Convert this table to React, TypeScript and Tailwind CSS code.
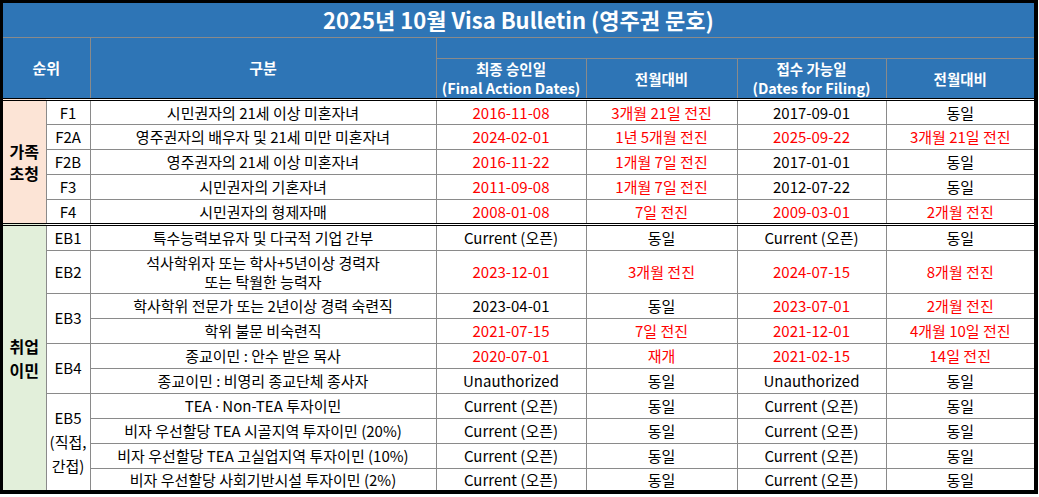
import React from 'react';

type Val = [string, boolean];

type Row = {
  desc: React.ReactNode;
  fa: Val;
  faDiff: Val;
  df: Val;
  dfDiff: Val;
  h?: string;
};

const cur: Val = ['Current (오픈)', false];
const same: Val = ['동일', false];

const family: (Row & { code: string })[] = [
  { code: 'F1', desc: '시민권자의 21세 이상 미혼자녀', fa: ['2016-11-08', true], faDiff: ['3개월 21일 전진', true], df: ['2017-09-01', false], dfDiff: same },
  { code: 'F2A', desc: '영주권자의 배우자 및 21세 미만 미혼자녀', fa: ['2024-02-01', true], faDiff: ['1년 5개월 전진', true], df: ['2025-09-22', true], dfDiff: ['3개월 21일 전진', true] },
  { code: 'F2B', desc: '영주권자의 21세 이상 미혼자녀', fa: ['2016-11-22', true], faDiff: ['1개월 7일 전진', true], df: ['2017-01-01', false], dfDiff: same },
  { code: 'F3', desc: '시민권자의 기혼자녀', fa: ['2011-09-08', true], faDiff: ['1개월 7일 전진', true], df: ['2012-07-22', false], dfDiff: same },
  { code: 'F4', desc: '시민권자의 형제자매', fa: ['2008-01-08', true], faDiff: ['7일 전진', true], df: ['2009-03-01', true], dfDiff: ['2개월 전진', true] },
];

// one group per code cell, rows share it via rowSpan
const employment: { code: React.ReactNode; rows: Row[] }[] = [
  { code: 'EB1', rows: [{ desc: '특수능력보유자 및 다국적 기업 간부', fa: cur, faDiff: same, df: cur, dfDiff: same }] },
  {
    code: 'EB2',
    rows: [
      {
        desc: (
          <>
            석사학위자 또는 학사+5년이상 경력자
            <br />
            또는 탁월한 능력자
          </>
        ),
        fa: ['2023-12-01', true],
        faDiff: ['3개월 전진', true],
        df: ['2024-07-15', true],
        dfDiff: ['8개월 전진', true],
        h: 'h-[43px]',
      },
    ],
  },
  {
    code: 'EB3',
    rows: [
      { desc: '학사학위 전문가 또는 2년이상 경력 숙련직', fa: ['2023-04-01', false], faDiff: same, df: ['2023-07-01', true], dfDiff: ['2개월 전진', true] },
      { desc: '학위 불문 비숙련직', fa: ['2021-07-15', true], faDiff: ['7일 전진', true], df: ['2021-12-01', true], dfDiff: ['4개월 10일 전진', true] },
    ],
  },
  {
    code: 'EB4',
    rows: [
      { desc: '종교이민 : 안수 받은 목사', fa: ['2020-07-01', true], faDiff: ['재개', true], df: ['2021-02-15', true], dfDiff: ['14일 전진', true] },
      { desc: '종교이민 : 비영리 종교단체 종사자', fa: ['Unauthorized', false], faDiff: same, df: ['Unauthorized', false], dfDiff: same },
    ],
  },
  {
    code: (
      <>
        EB5
        <br />
        (직접,
        <br />
        간접)
      </>
    ),
    rows: [
      {
        desc: (
          <>
            TEA <span className="font-['Noto_Sans']">·</span> Non-TEA 투자이민
          </>
        ),
        fa: cur,
        faDiff: same,
        df: cur,
        dfDiff: same,
      },
      { desc: '비자 우선할당 TEA 시골지역 투자이민 (20%)', fa: cur, faDiff: same, df: cur, dfDiff: same },
      { desc: '비자 우선할당 TEA 고실업지역 투자이민 (10%)', fa: cur, faDiff: same, df: cur, dfDiff: same },
      { desc: '비자 우선할당 사회기반시설 투자이민 (2%)', fa: cur, faDiff: same, df: cur, dfDiff: same, h: 'h-[22px]' },
    ],
  },
];

const td = 'border border-[#8a8a8a] text-center align-middle p-0 leading-[19px]';
const sep = 'border-t-[3px] border-t-black border-double';

function V({ v, first }: { v: Val; first?: boolean }) {
  return <td className={`${td} ${first ? sep : ''} ${v[1] ? 'text-[#ff0000]' : 'text-black'}`}>{v[0]}</td>;
}

function DataCells({ r, first }: { r: Row; first?: boolean }) {
  return (
    <>
      <td className={`${td} ${first ? sep : ''} text-black`}>{r.desc}</td>
      <V v={r.fa} first={first} />
      <V v={r.faDiff} first={first} />
      <V v={r.df} first={first} />
      <V v={r.dfDiff} first={first} />
    </>
  );
}

export default function App() {
  const th = 'border border-[#8a8a8a] text-center align-middle font-bold text-white p-0 leading-[19px]';

  return (
    <div className="w-[1039px] h-[497px] bg-white" style={{ fontFamily: '"Noto Sans CJK KR", "Noto Sans", sans-serif' }}>
      <div className="w-[1038px] border-l-[3px] border-t-[3px] border-r-[4px] border-b-[4px] border-black">
        <table className="w-full table-fixed border-collapse border-hidden text-[15px]">
          <colgroup>
            <col className="w-[43px]" />
            <col className="w-[44px]" />
            <col className="w-[346px]" />
            <col className="w-[150px]" />
            <col className="w-[151px]" />
            <col className="w-[149px]" />
            <col />
          </colgroup>
          <thead className="bg-[#2e75b6]">
            <tr className="h-[34px]">
              <th colSpan={7} className={`${th} text-[22px]`}>
                2025년 10월 Visa Bulletin (영주권 문호)
              </th>
            </tr>
            <tr className="h-[21px]">
              <th colSpan={2} rowSpan={2} className={th}>
                순위
              </th>
              <th rowSpan={2} className={th}>
                구분
              </th>
              <th colSpan={4} className={th} />
            </tr>
            <tr className="h-[41px] text-[14.5px]">
              <th className={th}>
                최종 승인일
                <br />
                (Final Action Dates)
              </th>
              <th className={th}>전월대비</th>
              <th className={th}>
                접수 가능일
                <br />
                (Dates for Filing)
              </th>
              <th className={th}>전월대비</th>
            </tr>
          </thead>
          <tbody>
            {family.map((r, i) => (
              <tr key={r.code} className="h-[25px]">
                {i === 0 && (
                  <td rowSpan={family.length} className={`${td} ${sep} bg-[#fce4d6] font-bold text-black text-[16px] leading-[22px]`}>
                    가족
                    <br />
                    초청
                  </td>
                )}
                <td className={`${td} ${i === 0 ? sep : ''} text-black`}>{r.code}</td>
                <DataCells r={r} first={i === 0} />
              </tr>
            ))}
            {employment.map((g, gi) =>
              g.rows.map((r, i) => (
                <tr key={`${gi}-${i}`} className={r.h ?? 'h-[25px]'}>
                  {gi === 0 && i === 0 && (
                    <td rowSpan={10} className={`${td} ${sep} bg-[#e2efda] font-bold text-black text-[16px] leading-[24px]`}>
                      취업
                      <br />
                      이민
                    </td>
                  )}
                  {i === 0 && (
                    <td rowSpan={g.rows.length} className={`${td} ${gi === 0 ? sep : ''} text-black leading-[24px]`}>
                      {g.code}
                    </td>
                  )}
                  <DataCells r={r} first={gi === 0} />
                </tr>
              ))
            )}
          </tbody>
        </table>
      </div>
    </div>
  );
}
